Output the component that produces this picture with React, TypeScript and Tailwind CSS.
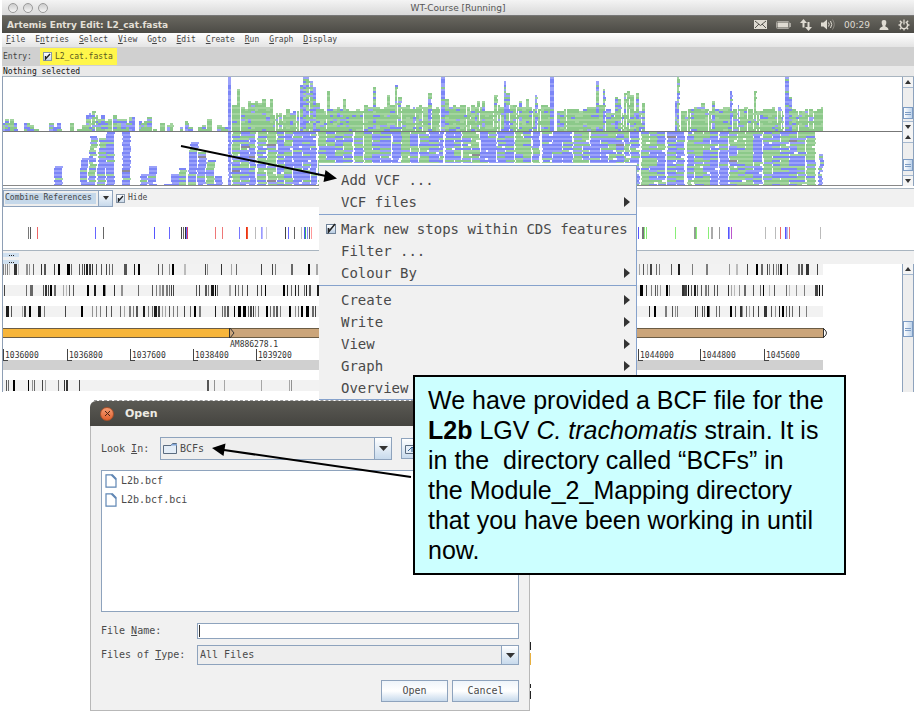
import React from "react";

const MONO = "font-['DejaVu_Sans_Mono','Liberation_Mono',monospace]";

/* ---------- small helpers ---------- */

function makeRandom(seed: number) {
  let s = seed;
  return () => {
    s = (s * 1664525 + 1013904223) % 4294967296;
    return s / 4294967296;
  };
}

const GREEN = ["#8cc98a", "#a3d49f"];
const BLUE = ["#7c86f6", "#9ba2fa"];

/* ---------- read coverage: [x start, x end, height, share of blue reads] ---------- */

const COVERAGE: [number, number, number, number][] = [
  [0, 3, 7, 0.3], [3, 6, 12, 0.6], [6, 8, 8, 0.4], [8, 15, 11, 0.3], [22, 25, 7, 0.7], [25, 28, 8, 0.5],
  [28, 31, 6, 0.4], [32, 36, 2, 0], [47, 51, 7, 0.5], [51, 55, 4, 0.7], [55, 59, 8, 0.3], [68, 71, 8, 0.3],
  [75, 80, 1, 0], [80, 84, 6, 0.2], [84, 87, 15, 0.5], [87, 90, 17, 0.2], [90, 94, 20, 0.2], [94, 96, 16, 0.2],
  [96, 99, 11, 0.4], [99, 103, 16, 0.6], [103, 106, 9, 0.3], [106, 109, 12, 0.1], [111, 115, 16, 0.4],
  [115, 119, 12, 0.2], [119, 124, 11, 0.4], [124, 127, 8, 0.2], [127, 130, 13, 0.5], [130, 133, 14, 0.9],
  [137, 139, 10, 0.6], [139, 142, 7, 0.3], [142, 145, 10, 0.2], [145, 149, 13, 0.3], [151, 158, 3, 0.2],
  [158, 162, 8, 0.4], [165, 171, 8, 0.4], [178, 181, 3, 0.5], [183, 186, 9, 0.6], [186, 190, 3, 0.6],
  [196, 200, 4, 0.6], [200, 204, 6, 0.7], [205, 209, 11, 0.3], [215, 219, 6, 0.1], [219, 223, 3, 0],
  [223, 226, 4, 0.1], [226, 229, 54, 1], [230, 235, 26, 0.1], [235, 238, 42, 0.08], [239, 246, 25, 0.1],
  [246, 256, 29, 0.15], [256, 260, 27, 0.1], [260, 264, 31, 0.1], [264, 268, 24, 0.1], [268, 271, 31, 0.05],
  [271, 284, 18, 0.12], [284, 288, 22, 0.05], [288, 298, 20, 0.2], [298, 301, 46, 0.7], [301, 304, 54, 0.6],
  [304, 308, 54, 0.4], [308, 311, 50, 0.2], [311, 314, 43, 0.7], [314, 318, 27, 0.3], [318, 325, 22, 0.2],
  [325, 328, 40, 0.05], [328, 341, 24, 0.15], [341, 344, 31, 0.1], [344, 362, 21, 0.1], [362, 371, 25, 0.1],
  [371, 374, 43, 0.6], [374, 385, 24, 0.1], [385, 388, 36, 0.1], [388, 393, 25, 0.2], [393, 396, 46, 0.1],
  [396, 400, 34, 0.3], [400, 426, 25, 0.1], [426, 430, 38, 0.6], [430, 438, 24, 0.1], [439, 443, 54, 0.7],
  [443, 447, 31, 0.1], [447, 475, 26, 0.1], [475, 478, 30, 0.1], [478, 480, 24, 0.1], [480, 483, 30, 0.3],
  [483, 492, 21, 0.1], [492, 496, 35, 0.1], [496, 502, 25, 0.1], [502, 504, 50, 0.8], [504, 508, 37, 0.5],
  [508, 517, 25, 0.15], [517, 520, 30, 0.3], [520, 524, 23, 0.1], [524, 527, 31, 0.1], [527, 533, 23, 0.1],
  [533, 536, 35, 0.5], [536, 548, 25, 0.1], [548, 552, 54, 0.8], [555, 585, 22, 0.12], [585, 594, 27, 0.12],
  [594, 597, 50, 0.4], [597, 601, 25, 0.2], [601, 604, 42, 0.6], [604, 609, 22, 0.2], [609, 613, 18, 0.1],
  [613, 616, 34, 0.5], [616, 620, 31, 0.2], [620, 622, 18, 0.1], [622, 628, 39, 0.2], [628, 632, 35, 0.1],
  [632, 634, 20, 0.4], [634, 637, 38, 0.3], [637, 640, 20, 0.2], [640, 643, 28, 0.2], [673, 675, 30, 0.9],
  [675, 678, 54, 0.5], [679, 692, 22, 0.1], [692, 699, 25, 0.15], [699, 703, 27, 0.1], [703, 710, 22, 0.1],
  [710, 713, 30, 0.7], [713, 726, 24, 0.12], [726, 728, 24, 0.1], [728, 731, 39, 0.8], [731, 736, 22, 0.2],
  [736, 738, 26, 0.6], [738, 752, 23, 0.1], [752, 755, 39, 0.1], [755, 766, 22, 0.1], [766, 782, 23, 0.1],
  [783, 787, 54, 0.8], [787, 790, 34, 0.6], [790, 812, 22, 0.15], [812, 821, 23, 0.05],
];

const BASE = 54;

function CoveragePlot() {
  const rnd = makeRandom(11);
  const out: React.ReactElement[] = [];
  COVERAGE.forEach(([a, b, h, blue], seg) => {
    let x = a;
    let i = 0;
    while (x < b) {
      const w = b - x <= 5 ? b - x : 3 + Math.floor(rnd() * 2);
      const top = b - a > 5 ? h - Math.floor(rnd() * 4) : h;
      const split = rnd() < 0.35;
      for (let y = 0; y < top; y += 2) {
        const pal = rnd() < blue ? BLUE : GREEN;
        const gap = split && rnd() < 0.6 ? 1 : 0;
        out.push(
          <rect
            key={`${seg}-${i}-${y}`}
            x={x}
            y={BASE - y - 2}
            width={Math.max(1, w - gap + (h < 14 ? 1 : 0))}
            height={2}
            fill={pal[(y / 2) % 3 === 2 || rnd() < 0.15 ? 1 : 0]}
          />
        );
      }
      x += w;
      i += 1;
    }
  });
  return (
    <svg width="825" height="54" viewBox="1 0 825 54" shapeRendering="crispEdges" className="block" aria-label="Read coverage">
      {out}
    </svg>
  );
}

/* ---------- stacked reads: [x start, x end, top, share of blue reads] ---------- */

const STACKS: [number, number, number, number][] = [
  [52, 60, 34, 0.5], [78, 85, 25, 0.7], [86, 93, 4, 0.55], [95, 103, 5, 0.7], [104, 112, 0, 0.85],
  [120, 128, 0, 0.95], [138, 145, 42, 0.6], [146, 154, 34, 0.55], [161, 168, 51, 0.9], [169, 177, 41, 0.9],
  [177, 184, 36, 0.55], [186, 194, 9, 0.8], [195, 203, 20, 0.85], [204, 212, 28, 0.6], [213, 220, 43, 0.8],
  [226, 229, 0, 1], [230, 238, 0, 0.3], [238, 247, 0, 0.6], [247, 253, 0, 0.75], [255, 264, 0, 0.5],
  [265, 274, 0, 0.15], [275, 282, 0, 0.7], [282, 290, 0, 0.6], [291, 300, 0, 0.8], [300, 308, 0, 0.8],
  [308, 314, 0, 0.85], [316, 324, 0, 0.4], [324, 333, 0, 0.7], [333, 341, 0, 0.6], [341, 350, 0, 0.35],
  [352, 361, 0, 0.4], [362, 370, 0, 0.1], [370, 378, 0, 0.45], [378, 389, 0, 0.8], [390, 399, 0, 0.8],
  [399, 408, 0, 0.2], [408, 416, 0, 0.7], [417, 427, 0, 0.4], [427, 437, 0, 0.7], [437, 441, 0, 0.9],
  [443, 452, 0, 0.7], [452, 459, 0, 0.6], [460, 469, 0, 0.3], [469, 477, 0, 0.2], [478, 486, 0, 0.8],
  [486, 494, 0, 0.8], [495, 503, 0, 0.6], [503, 512, 0, 0.7], [513, 521, 0, 0.15], [521, 529, 0, 0.3],
  [530, 537, 0, 0.8], [540, 550, 0, 0.85], [550, 560, 0, 0.9], [560, 570, 0, 0.7], [571, 580, 0, 0.3],
  [580, 587, 0, 0.4], [588, 598, 0, 0.8], [598, 606, 0, 0.7], [606, 614, 0, 0.6], [614, 622, 0, 0.7],
  [622, 627, 0, 0.6], [628, 637, 0, 0.8], [639, 647, 0, 0.15], [647, 655, 0, 0.4], [655, 663, 0, 0.65],
  [665, 674, 0, 0.6], [674, 682, 0, 0.55], [685, 692, 0, 0.5], [692, 701, 0, 0.2], [701, 708, 0, 0.55],
  [708, 716, 0, 0.8], [717, 726, 0, 0.8], [727, 735, 0, 0.3], [735, 743, 0, 0.15], [743, 751, 0, 0.2],
  [751, 760, 0, 0.7], [761, 770, 0, 0.4], [770, 778, 0, 0.5], [778, 787, 0, 0.3], [787, 795, 0, 0.6],
  [795, 803, 0, 0.3], [804, 813, 0, 0.25], [816, 820, 22, 0.7],
];

function StackPlot() {
  const rnd = makeRandom(37);
  const out: React.ReactElement[] = [];
  STACKS.forEach(([a, b, top, blue], seg) => {
    let row = 0;
    for (let y = 0; y <= 54 - top - 2; y += 2) {
      const pal = rnd() < blue ? BLUE : GREEN;
      const slide = rnd() < 0.3 ? 1 : 0;
      const lean = top > 0 ? Math.floor(y / 18) : 0;
      const open = rnd() < 0.05 ? 3 : 0;
      out.push(
        <rect
          key={`${seg}-${y}`}
          x={a + slide + lean}
          y={54 - y - 2}
          width={Math.max(2, b - a - open)}
          height={2}
          fill={rnd() < 0.01 ? "#8d8a94" : pal[row % 2]}
        />
      );
      row += 1;
    }
  });
  return (
    <svg width="825" height="53" viewBox="1 0 825 53" shapeRendering="crispEdges" className="block" aria-label="Stacked reads">
      {out}
    </svg>
  );
}

/* ---------- variants ---------- */

const VARIANTS: [number, string][] = [
  [26, "#777"], [28, "#555"], [35, "#e66"], [93, "#66f"], [101, "#666"], [152, "#55f"], [167, "#66f"],
  [179, "#444"], [181, "#666"], [183, "#333"], [184, "#66f"], [185, "#d46"], [213, "#e77"], [220, "#e77"],
  [237, "#77f"], [244, "#e31"], [245, "#e53"], [253, "#bbb"], [259, "#99f"], [260, "#bbf"], [264, "#ccc"],
  [283, "#444"], [286, "#66f"], [292, "#666"], [299, "#bbb"], [302, "#55f"], [303, "#3a6"], [305, "#88f"],
  [307, "#666"], [309, "#f99"], [636, "#55f"], [640, "#777"], [641, "#777"], [642, "#8e7"], [644, "#8e7"],
  [673, "#8e7"], [692, "#999"], [693, "#8a8"], [694, "#8e7"], [706, "#8e7"], [709, "#aaa"], [710, "#aaa"],
  [717, "#999"], [726, "#55f"], [727, "#99f"], [729, "#b5c"], [763, "#bbb"], [773, "#bbb"], [778, "#e66"],
  [783, "#55f"], [784, "#99f"], [785, "#bbd"], [787, "#e77"], [818, "#bbb"],
];

function VariantPlot() {
  return (
    <svg width="825" height="44" viewBox="1 0 825 44" shapeRendering="crispEdges" className="block" aria-label="Variants">
      {VARIANTS.map(([x, c]) => (
        <rect key={x} x={x} y={20} width={1} height={12} fill={c} />
      ))}
    </svg>
  );
}

/* ---------- reading frames: x, width and shade of each stop codon ---------- */

type Mark = [number, number, number];

const FRAME_A: Mark[] = [
  [1, 1, 6], [3, 1, 7], [5, 1, 6], [7, 1, 9], [12, 3, 2], [16, 1, 9], [24, 2, 7], [27, 1, 7], [31, 1, 5], [39, 1, 2], [42, 2, 4],
  [52, 1, 3], [56, 2, 0], [65, 3, 0], [69, 1, 5], [77, 1, 4], [80, 1, 4], [82, 1, 2], [84, 2, 1], [87, 2, 3], [90, 1, 2], [94, 1, 4],
  [99, 1, 4], [104, 1, 3], [107, 1, 5], [110, 1, 5], [122, 3, 4], [132, 1, 1], [136, 2, 0], [156, 1, 4], [160, 1, 5], [167, 1, 7],
  [170, 2, 0], [182, 2, 9], [203, 1, 3], [205, 1, 7], [219, 1, 2], [229, 1, 8], [234, 1, 5], [259, 1, 3], [270, 1, 3], [273, 1, 6],
  [289, 2, 5], [306, 2, 0], [314, 2, 8], [637, 1, 8], [641, 1, 4], [645, 1, 8], [648, 2, 3], [654, 1, 5], [657, 1, 6], [669, 1, 4],
  [676, 2, 1], [690, 1, 6], [704, 2, 6], [727, 1, 7], [734, 2, 9], [745, 1, 3], [754, 2, 0], [759, 2, 5], [765, 1, 3], [767, 1, 6],
  [771, 1, 4], [774, 1, 7], [776, 1, 5], [778, 2, 0], [785, 1, 3], [796, 2, 5], [799, 2, 4], [804, 3, 2], [815, 1, 3],
];
const FRAME_B: Mark[] = [
  [2, 1, 3], [24, 1, 5], [28, 3, 5], [41, 1, 4], [43, 2, 2], [46, 1, 3], [48, 2, 0], [52, 2, 5], [61, 1, 8], [64, 1, 9], [67, 1, 5],
  [71, 1, 4], [85, 2, 0], [92, 2, 1], [101, 2, 0], [103, 1, 7], [112, 1, 2], [119, 2, 7], [136, 1, 5], [150, 1, 4], [154, 1, 6],
  [157, 2, 8], [160, 2, 6], [164, 2, 6], [167, 1, 5], [169, 1, 3], [171, 1, 3], [194, 1, 4], [197, 1, 3], [203, 2, 4], [206, 1, 6],
  [209, 3, 1], [213, 1, 0], [215, 1, 5], [227, 2, 8], [233, 1, 3], [236, 1, 6], [240, 1, 5], [245, 1, 3], [255, 1, 3], [259, 1, 4],
  [263, 1, 0], [281, 2, 0], [285, 1, 2], [289, 1, 5], [293, 1, 1], [296, 1, 3], [302, 1, 5], [304, 1, 1], [307, 2, 4], [315, 2, 1],
  [638, 3, 0], [644, 1, 3], [649, 1, 6], [653, 1, 4], [655, 1, 6], [658, 1, 8], [664, 2, 0], [667, 1, 6], [680, 2, 2], [682, 3, 3],
  [686, 1, 0], [689, 1, 4], [692, 2, 1], [695, 1, 5], [699, 1, 4], [703, 2, 6], [706, 1, 5], [712, 1, 4], [715, 1, 4], [726, 1, 2],
  [729, 1, 8], [732, 1, 9], [737, 1, 7], [742, 2, 5], [751, 1, 4], [758, 1, 5], [761, 1, 0], [767, 1, 9], [772, 1, 4], [784, 1, 5],
  [787, 1, 9], [794, 1, 7], [802, 1, 6], [813, 3, 3], [817, 1, 0], [820, 1, 2],
];
const FRAME_C: Mark[] = [
  [4, 3, 1], [9, 1, 4], [20, 1, 8], [22, 2, 3], [27, 2, 0], [36, 3, 1], [42, 1, 6], [63, 1, 3], [79, 2, 0], [90, 1, 7], [94, 1, 7],
  [98, 1, 6], [104, 1, 4], [109, 1, 4], [118, 1, 5], [122, 1, 8], [127, 2, 6], [131, 1, 6], [134, 2, 4], [141, 2, 1], [146, 1, 6],
  [150, 1, 5], [152, 3, 1], [156, 2, 3], [160, 1, 8], [163, 1, 8], [167, 1, 4], [171, 1, 6], [175, 1, 6], [182, 1, 3], [188, 1, 5],
  [192, 2, 0], [197, 2, 6], [213, 1, 1], [220, 1, 5], [222, 2, 6], [225, 2, 4], [232, 1, 0], [236, 3, 0], [241, 3, 0], [246, 1, 5],
  [248, 2, 3], [251, 1, 2], [253, 1, 8], [256, 1, 6], [264, 2, 0], [268, 1, 5], [271, 2, 6], [274, 2, 4], [278, 1, 6], [287, 2, 0],
  [293, 1, 7], [296, 1, 6], [299, 2, 0], [304, 3, 0], [310, 2, 5], [313, 1, 3], [647, 1, 2], [652, 2, 0], [663, 2, 6], [670, 1, 4],
  [673, 1, 7], [675, 1, 6], [693, 1, 2], [695, 1, 5], [700, 1, 3], [702, 1, 5], [705, 2, 0], [707, 1, 5], [714, 1, 5], [717, 1, 5],
  [728, 2, 0], [733, 1, 4], [738, 2, 2], [740, 1, 7], [744, 1, 5], [747, 1, 8], [751, 1, 4], [756, 1, 3], [762, 3, 2], [769, 1, 4],
  [773, 1, 7], [777, 1, 1], [780, 2, 0], [784, 1, 5], [787, 1, 4], [790, 1, 5], [797, 1, 4], [804, 1, 6],
];
const FRAME_D: Mark[] = [
  [4, 1, 4], [6, 1, 5], [11, 2, 0], [26, 1, 0], [30, 1, 7], [32, 1, 5], [40, 1, 3], [43, 1, 8], [56, 1, 6], [62, 1, 2], [64, 2, 2],
  [77, 1, 3], [205, 2, 4], [212, 1, 7], [222, 1, 8], [259, 1, 8], [287, 1, 8], [289, 1, 7],
];

const SHADE = ["#000", "#1c1c1c", "#333", "#444", "#555", "#686868", "#7c7c7c", "#919191", "#a6a6a6", "#bbb"];

function Frame({ y, marks, width }: { y: number; marks: Mark[]; width: number }) {
  return (
    <g shapeRendering="crispEdges">
      <rect x={0} y={y} width={width} height={11} fill="#f2f2f2" />
      {marks.map(([x, w, s]) => (
        <rect key={x} x={x} y={y} width={w} height={11} fill={SHADE[s]} />
      ))}
    </g>
  );
}

const RULER: [number, string][] = [
  [1, "1036000"], [65, "1036800"], [128, "1037600"], [191, "1038400"], [254, "1039200"],
  [636, "1044000"], [698, "1044800"], [762, "1045600"],
];

function FeaturePlot() {
  return (
    <svg width="825" height="128" viewBox="1 0 825 128" className="block" aria-label="Sequence features">
      <Frame y={0} marks={FRAME_A} width={821} />
      <Frame y={21} marks={FRAME_B} width={821} />
      <Frame y={42} marks={FRAME_C} width={821} />
      <rect x={0} y={64} width={228} height={10} fill="#f7b53a" />
      <rect x={228} y={64} width={594} height={10} fill="#cba57a" />
      <path d="M0 64.500H822M0 73.500H822" stroke="#6b5c45" fill="none" />
      <path d="M227.500 64v10M228 64l4 5l-4 5M821.500 64v10M822 65q5 4 0 8" stroke="#333" fill="none" />
      <text x={228} y={83} className="fill-[#333] text-[8px]">AM886278.1</text>
      <rect x={0} y={96} width={821} height={10} fill="#d0d0d0" shapeRendering="crispEdges" />
      {RULER.map(([x, t]) => (
        <g key={t}>
          <path d={`M${x + 0.5} 85v11M${x} 96.500h5`} stroke="#444" fill="none" />
          <text x={x + 2} y={94} className="fill-[#333] text-[8px]">{t}</text>
        </g>
      ))}
      <Frame y={116} marks={FRAME_D} width={821} />
    </svg>
  );
}

/* ---------- swing style widgets ---------- */

const FACE = "bg-linear-to-b from-white to-[#c8daec]";

function Triangle({ up = false }: { up?: boolean }) {
  return (
    <svg width="6" height="4" viewBox="0 0 6 4" aria-hidden="true">
      <path d={up ? "M0 4L3 0L6 4Z" : "M0 0L3 4L6 0Z"} fill="#333" />
    </svg>
  );
}

function ScrollBar({ before, label }: { before: string; label: string }) {
  return (
    <div className="flex w-3 shrink-0 flex-col border-x border-[#8ea3bd] bg-[#eee]" role="group" aria-label={label}>
      <button aria-label="Scroll up" className="flex h-[11px] shrink-0 items-center justify-center border-b border-[#a5b8cf] bg-[#f4f4f4]">
        <Triangle up />
      </button>
      <div className={before} />
      <div className="flex h-3 shrink-0 flex-col items-center justify-center gap-px border border-[#7d9cc4] bg-linear-to-r from-white to-[#bdd2ea]">
        <div className="h-px w-1.5 bg-[#7d9cc4]" />
        <div className="h-px w-1.5 bg-[#7d9cc4]" />
      </div>
      <div className="flex-1" />
      <button aria-label="Scroll down" className="flex h-[11px] shrink-0 items-center justify-center border-t border-[#a5b8cf] bg-[#f4f4f4]">
        <Triangle />
      </button>
    </div>
  );
}

function Tick({ id }: { id: string }) {
  return (
    <span className="relative flex size-[9px] shrink-0">
      <input
        id={id}
        type="checkbox"
        defaultChecked
        className="peer size-[9px] appearance-none border border-[#8796a8] bg-linear-to-b from-white to-[#c9d8e8]"
      />
      <svg viewBox="0 0 9 9" className="pointer-events-none absolute inset-0 hidden peer-checked:block" aria-hidden="true">
        <path d="M2.500 4v3L7 2" stroke="#222" strokeWidth="1.300" fill="none" />
      </svg>
    </span>
  );
}

function Mnemonic({ text, at }: { text: string; at: number }) {
  return (
    <>
      {text.slice(0, at)}
      <span className="underline">{text[at]}</span>
      {text.slice(at + 1)}
    </>
  );
}

/* ---------- main window ---------- */

const MENUS: [string, number][] = [
  ["File", 0], ["Entries", 1], ["Select", 0], ["View", 0], ["Goto", 1],
  ["Edit", 0], ["Create", 0], ["Run", 0], ["Graph", 0], ["Display", 0],
];

function StatusIcons() {
  return (
    <div className="flex items-center gap-[9px] text-[#dfdbd2]">
      <svg width="13" height="9" viewBox="0 0 13 9" aria-label="Mail">
        <rect width="13" height="9" fill="currentColor" />
        <path d="M1 1l5.500 4.500L12 1M1 8l4-4M12 8L8 4" stroke="#55534d" fill="none" />
      </svg>
      <svg width="15" height="8" viewBox="0 0 15 8" aria-label="Battery">
        <rect x=".5" y=".5" width="12.500" height="7" rx="1" fill="none" stroke="#a9a69f" />
        <rect x="1.500" y="1.500" width="10.500" height="5" fill="currentColor" />
        <rect x="13" y="2" width="2" height="4" fill="#a9a69f" />
      </svg>
      <svg width="12" height="12" viewBox="0 0 12 12" aria-label="Network">
        <path d="M3.500 0L7 4H4.500V8.500h-2V4H0ZM8.500 12L5 8h2.500V3h2v5H12Z" fill="currentColor" />
      </svg>
      <svg width="14" height="11" viewBox="0 0 14 11" aria-label="Volume">
        <path d="M0 3.500h2.500L6 .5v10L2.500 7.500H0Z" fill="currentColor" />
        <path d="M7.500 3.500q1.500 2 0 4M9.500 2q2.500 3.500 0 7" stroke="currentColor" fill="none" />
        <path d="M11.500 .5q3.500 5 0 10" stroke="#8d8a83" fill="none" />
      </svg>
      <span className="text-[9px]">00:29</span>
      <svg width="10" height="10" viewBox="0 0 10 10" aria-label="User">
        <path d="M5 0C7 0 7.500 1.200 7.300 3C7.200 4.500 6.500 5 6.300 6C6.500 7.300 9.500 7 9.500 10H.5C.5 7 3.500 7.300 3.700 6C3.500 5 2.800 4.500 2.700 3C2.500 1.200 3 0 5 0Z" fill="currentColor" />
      </svg>
      <svg width="12" height="12" viewBox="0 0 12 12" aria-label="System">
        <path d="M4.300 2.900A3.600 3.600 0 1 0 7.700 2.900" fill="none" stroke="currentColor" strokeWidth="1.500" />
        <path d="M6 .5v5M6 9.500v2M.5 6h2M9.500 6h2M1.800 1.800l1.500 1.500M10.200 1.800L8.700 3.300M1.800 10.200l1.500-1.500M10.200 10.200L8.700 8.700" stroke="currentColor" strokeWidth="1.300" />
      </svg>
    </div>
  );
}

function MainWindow() {
  return (
    <main className={`${MONO} pl-0.5 text-[8px] leading-[10px] text-[#444]`}>
      <header className="font-['DejaVu_Sans',sans-serif]">
        <div className="relative flex h-4 items-center justify-center border-b border-[#777] bg-linear-to-b from-[#f4f4f4] to-[#d9d9d9]">
          <div className="absolute left-1.5 flex gap-[5px]">
            {["Close", "Minimise", "Zoom"].map((n) => (
              <button key={n} aria-label={n} className="size-[10px] rounded-full border border-[#9a9a9a] bg-linear-to-b from-[#ccc] to-[#f5f5f5]" />
            ))}
          </div>
          <span className="text-[9px] text-[#555]">WT-Course [Running]</span>
        </div>
        <div className="flex h-[17px] items-center justify-between bg-linear-to-b from-[#69675f] to-[#4c4b46] pr-1 pl-[5px]">
          <h1 className="text-[9px] font-bold text-[#e4e0d8]">Artemis Entry Edit: L2_cat.fasta</h1>
          <StatusIcons />
        </div>
      </header>
      <nav className="flex h-[14px] items-center gap-[10px] bg-linear-to-b from-white to-[#e4e4e4] pl-1">
        {MENUS.map(([t, at]) => (
          <button key={t}><Mnemonic text={t} at={at} /></button>
        ))}
      </nav>
      <div className="flex h-[19px] items-center gap-2 bg-[#d0d0d0] pl-px">
        <span>Entry:</span>
        <label htmlFor="entry" className="flex h-[17px] items-center gap-[3px] bg-[#fff64a] pr-1 pl-[3px] text-[#5b5820]">
          <Tick id="entry" />
          L2_cat.fasta
        </label>
      </div>
      <p className="h-[10px] bg-[#e9e9e9] pl-px leading-3 text-[#111]">Nothing selected</p>

      <div className="border-l border-[#8e9fb5] bg-white">
        <section className="flex border-t border-[#a9b5c0]">
          <div className="min-w-0 flex-1 overflow-hidden border-b border-[#777]"><CoveragePlot /></div>
          <ScrollBar before="h-[19px]" label="Coverage scroll" />
        </section>
        <section className="flex">
          <div className="min-w-0 flex-1 overflow-hidden border-b border-[#888]"><StackPlot /></div>
          <ScrollBar before="h-[16px]" label="Reads scroll" />
        </section>
        <section className="mt-0.5 flex h-[19px] items-center border-t border-[#a9b5c0] bg-[#f1f1f1]">
          <div className="relative flex h-[17px] w-[110px] border border-[#8ea3bd] bg-[#eee]">
            <select aria-label="View" className="my-0.5 ml-px w-[91px] appearance-none bg-[#c5d8ea] text-[8px] text-[#444]">
              <option>Combine References</option>
            </select>
            <div className={`pointer-events-none absolute inset-y-0 right-0 flex w-[14px] items-center justify-center border-l border-[#8ea3bd] ${FACE}`}>
              <Triangle />
            </div>
          </div>
          <label htmlFor="hide" className="ml-[3px] flex items-center gap-[3px]">
            <Tick id="hide" />
            Hide
          </label>
        </section>
        <section className="h-[43px] overflow-hidden"><VariantPlot /></section>
        <div className="flex h-[14px] flex-col gap-[3px] border-t border-[#a9b5c0] bg-[#f1f1f1] pt-0.5">
          {["Collapse", "Expand"].map((n) => (
            <button key={n} aria-label={n} className="flex h-1 w-4 items-center justify-center gap-px bg-[#cfe0f0]">
              <span className="size-px bg-[#222]" />
              <span className="size-px bg-[#222]" />
              <span className="size-px bg-[#222]" />
            </button>
          ))}
        </div>
        <section className="flex">
          <div className="min-w-0 flex-1 overflow-hidden"><FeaturePlot /></div>
          <div className="flex w-3 flex-col border-x border-[#8ea3bd] bg-[#eee]">
            <button aria-label="Scroll up" className="flex h-[11px] items-center justify-center border-b border-[#a5b8cf] bg-[#f4f4f4]">
              <Triangle up />
            </button>
            <div className="mt-[46px] flex h-4 flex-col items-center justify-center gap-px border border-[#7d9cc4] bg-linear-to-r from-white to-[#bdd2ea]">
              <div className="h-px w-1.5 bg-[#7d9cc4]" />
              <div className="h-px w-1.5 bg-[#7d9cc4]" />
            </div>
          </div>
        </section>
      </div>
    </main>
  );
}

/* ---------- popup menu ---------- */

function MenuItem({ text, sub = false }: { text: string; sub?: boolean }) {
  return (
    <button role="menuitem" className="flex h-[22px] w-full items-center justify-between pr-1.5 pl-[22px]">
      {text}
      {sub && (
        <svg width="6" height="10" viewBox="0 0 6 10" aria-hidden="true">
          <path d="M0 0L6 5L0 10Z" fill="#333" />
        </svg>
      )}
    </button>
  );
}

function PopupMenu() {
  const rule = <div className="mt-px mb-[3px] h-px bg-[#86a2cc]" />;
  return (
    <div className="absolute top-[163px] left-[319px] w-[318px] bg-white pt-0.5">
      <div role="menu" className={`${MONO} border-t border-r border-b border-[#86a2cc] bg-[#f1f1f1] pt-[3px] text-[14px] text-[#4a4a4a]`}>
        <MenuItem text="Add VCF ..." />
        <MenuItem text="VCF files" sub />
        {rule}
        <label htmlFor="stops" className="flex h-[22px] items-center gap-[5px] pl-[7px] whitespace-nowrap">
          <span className="relative flex size-[10px] shrink-0">
            <input
              id="stops"
              type="checkbox"
              defaultChecked
              className="peer size-[10px] appearance-none border border-[#6f8298] bg-linear-to-b from-white to-[#b9cde2]"
            />
            <svg viewBox="0 0 10 10" className="pointer-events-none absolute inset-0 hidden overflow-visible peer-checked:block" aria-hidden="true">
              <path d="M2.500 4v4L9 0" stroke="#222" strokeWidth="1.600" fill="none" />
            </svg>
          </span>
          Mark new stops within CDS features
        </label>
        <MenuItem text="Filter ..." />
        <MenuItem text="Colour By" sub />
        {rule}
        <MenuItem text="Create" sub />
        <MenuItem text="Write" sub />
        <MenuItem text="View" sub />
        <MenuItem text="Graph" sub />
        <MenuItem text="Overview" />
      </div>
    </div>
  );
}

/* ---------- file chooser ---------- */

function FileIcon() {
  return (
    <svg width="12" height="14" viewBox="0 0 12 14" className="shrink-0" aria-hidden="true">
      <path d="M1 .8h6.500L11 4.500v8.700H1Z" fill="#fff" stroke="#5f86b4" strokeWidth="1.200" />
      <path d="M6.500 1L11 5.500" stroke="#5f86b4" strokeWidth="1.600" />
    </svg>
  );
}

function Drop({ width }: { width: string }) {
  return (
    <div className={`pointer-events-none absolute inset-y-0 right-0 flex items-center justify-center border-l border-[#8ea3bd] ${FACE} ${width}`}>
      <svg width="9" height="5" viewBox="0 0 9 5" aria-hidden="true">
        <path d="M0 0H9L4.500 5Z" fill="#333" />
      </svg>
    </div>
  );
}

function OpenDialog() {
  const button = `h-[22px] w-[67px] border border-[#8ea3bd] bg-linear-to-b from-[#eef4fa] via-white to-[#c8daec]`;
  return (
    <>
      <div className="absolute top-[642px] left-[530px] flex w-px flex-col gap-[3px]" aria-hidden="true">
        <div className="h-2 bg-[#222]" />
        <div className="h-3 bg-[#e8b040]" />
        <div className="mt-4 h-1 bg-[#222]" />
        <div className="h-2 bg-[#222]" />
      </div>
      <div className="absolute top-[400px] left-[94px] w-[320px] border-t border-dashed border-[#999]" aria-hidden="true" />
      <div role="dialog" aria-labelledby="open-title" className={`${MONO} absolute top-[401px] left-[90px] w-[440px] text-[10px] leading-[14px] text-[#4a4a4a]`}>
        <div className="flex h-[25px] items-center gap-[11px] rounded-t-md bg-linear-to-b from-[#5b5a54] to-[#454440] pl-[10px] font-['DejaVu_Sans',sans-serif]">
          <button aria-label="Close" className="flex size-[14px] items-center justify-center rounded-full border border-[#a8502a] bg-linear-to-b from-[#f59a70] to-[#e0602c]">
            <svg width="5" height="5" viewBox="0 0 5 5" aria-hidden="true">
              <path d="M0 0L5 5M5 0L0 5" stroke="#4a2414" />
            </svg>
          </button>
          <h2 id="open-title" className="text-[11px] font-bold text-[#eeebe4]">Open</h2>
        </div>
        <div className="border border-t-0 border-[#b8b8b8] bg-[#f1f1f1] px-[10px] pt-[11px] pb-2">
          <div className="flex h-[23px] items-center">
            <label htmlFor="look" className="w-[59px]"><Mnemonic text="Look In:" at={5} /></label>
            <div className="relative h-full w-[232px] border border-[#8ea3bd] bg-[#eee]">
              <svg width="14" height="11" viewBox="0 0 14 11" className="pointer-events-none absolute top-[5px] left-0.5" aria-hidden="true">
                <path d="M.5 2.500H8L9.500 .5H13.500V10.500H.5Z" fill="#e4edf7" stroke="#5b6c80" />
                <path d="M9 1h5v1.500H8Z" fill="#7fa3d6" />
              </svg>
              <select id="look" className="h-full w-full appearance-none pl-[19px]">
                <option>BCFs</option>
              </select>
              <Drop width="w-[17px]" />
            </div>
            <button aria-label="Up one level" className={`ml-[9px] flex h-[21px] w-[22px] items-center justify-start border border-[#8ea3bd] pl-[3px] ${FACE}`}>
              <svg width="14" height="11" viewBox="0 0 14 11" aria-hidden="true">
                <path d="M.5 2.500H8L9.500 .5H13.500V10.500H.5Z" fill="#e4edf7" stroke="#5b6c80" />
                <path d="M3 8l4-4l3 3M7 4v5" stroke="#33618f" fill="none" />
              </svg>
            </button>
          </div>
          <ul className="mt-[10px] h-[142px] border border-[#8ea3bd] bg-white pl-[3px]">
            {["L2b.bcf", "L2b.bcf.bci"].map((f) => (
              <li key={f} className="flex h-[19px] items-center gap-1"><FileIcon />{f}</li>
            ))}
          </ul>
          <div className="mt-[11px] flex h-4 items-center">
            <label htmlFor="name" className="w-24"><Mnemonic text="File Name:" at={5} /></label>
            <div className="flex h-full flex-1 items-center border border-[#8ea3bd] bg-white pl-px">
              <div className="h-3 w-px bg-[#333]" />
              <input id="name" className="h-full min-w-0 flex-1 bg-transparent outline-none" />
            </div>
          </div>
          <div className="mt-1.5 flex h-5 items-center">
            <label htmlFor="type" className="w-24"><Mnemonic text="Files of Type:" at={9} /></label>
            <div className="relative h-full flex-1 border border-[#8ea3bd] bg-[#eee]">
              <select id="type" className="block h-full w-full appearance-none pl-0.5">
                <option>All Files</option>
              </select>
              <Drop width="w-[17px]" />
            </div>
          </div>
          <div className="mt-[15px] flex justify-end gap-1">
            <button className={button}>Open</button>
            <button className={button}>Cancel</button>
          </div>
        </div>
      </div>
    </>
  );
}

/* ---------- annotation ---------- */

function Callout() {
  return (
    <aside className="absolute top-[375px] left-[413px] h-[200px] w-[433px] border-2 border-black bg-[#ccffff] pt-2 pl-[13px] font-['Liberation_Sans',Arial,sans-serif] text-[25px] leading-[30px] whitespace-pre text-black">
      <p>We have provided a BCF file for the</p>
      <p><b>L2b</b> LGV <i>C. trachomatis</i> strain. It is</p>
      <p>{"in the  directory called “BCFs” in"}</p>
      <p>the Module_2_Mapping directory</p>
      <p>that you have been working in until</p>
      <p>now.</p>
    </aside>
  );
}

function Pointers() {
  return (
    <svg width="420" height="490" viewBox="0 0 420 490" className="pointer-events-none absolute top-0 left-0" aria-hidden="true">
      <path d="M181 146L326 176M411 477L224 450" stroke="#000" strokeWidth="2" />
      <path d="M337 178.500L323.500 182L325.500 170ZM212 448L225.500 443.500L223.500 456Z" />
    </svg>
  );
}

export default function App() {
  return (
    <div className="relative min-h-[712px] overflow-hidden bg-white">
      <MainWindow />
      <OpenDialog />
      <PopupMenu />
      <Callout />
      <Pointers />
    </div>
  );
}
